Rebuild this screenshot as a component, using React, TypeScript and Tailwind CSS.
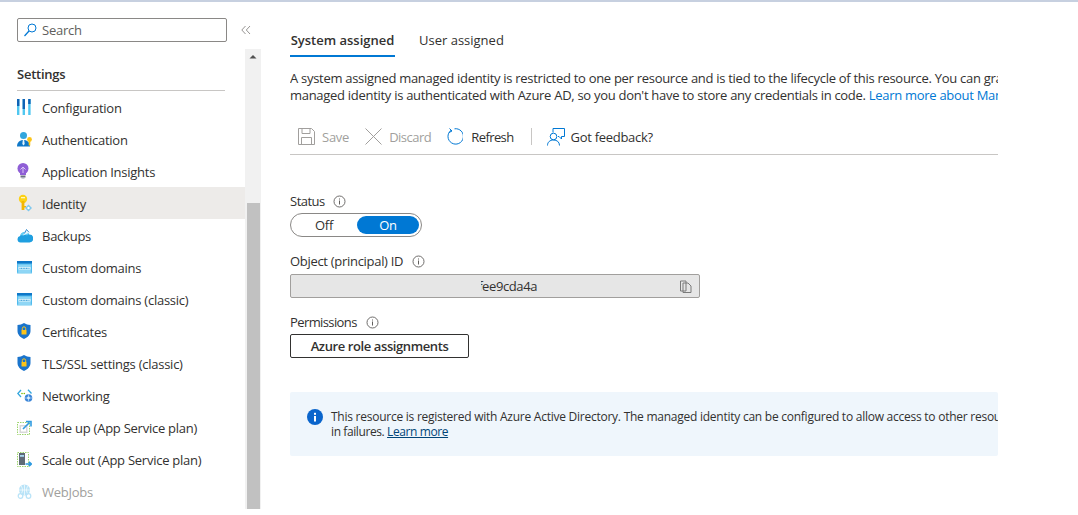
import React from "react";

const Key = () => (
  <svg width="16" height="18" viewBox="0 0 16 18"><circle cx="6" cy="5" r="4.2" fill="#fcd116"/><rect x="4.6" y="7" width="2.8" height="9" fill="#f2b705"/><rect x="7" y="12" width="2" height="1.5" fill="#f2b705"/><rect x="4" y="3" width="4" height="1.3" fill="#fff7c0"/><path d="M11.5 10.5l3.5 3.5-3.5 3.5-3.5-3.5z" fill="#7fc8ee"/><circle cx="11.5" cy="14" r="1.2" fill="#fff"/></svg>
);
const Config = () => (
  <svg width="14" height="16" viewBox="0 0 14 16"><rect x="0" y="0" width="2.4" height="16" fill="#50c7f0"/><rect x="5.6" y="0" width="2.4" height="16" fill="#50c7f0"/><rect x="11.2" y="0" width="2.4" height="16" fill="#50c7f0"/><rect x="0" y="0" width="2.4" height="7" fill="#0f62b5"/><rect x="5.6" y="0" width="2.4" height="10" fill="#0f62b5"/><rect x="11.2" y="0" width="2.4" height="5" fill="#0f62b5"/></svg>
);
const Auth = () => (
  <svg width="16" height="15" viewBox="0 0 16 15"><circle cx="6.5" cy="3.6" r="3.5" fill="#32a6dd"/><path d="M0 14.5c0-4 2.6-6.5 6.5-6.5s6.500 2.500 6.500 6.500z" fill="#0f78c8"/><path d="M5.800 8h1.400l.5 4-1.200 1.500L5.300 12z" fill="#e6f4fb"/><circle cx="12.500" cy="7.500" r="2.400" fill="#fcc419"/><rect x="11.700" y="8.500" width="1.600" height="5" fill="#fcc419"/></svg>
);
const Bulb = () => (
  <svg width="12" height="16" viewBox="0 0 12 16"><circle cx="6" cy="5.500" r="5.500" fill="#8f5fd6"/><path d="M3 9h6v3H3z" fill="#8f5fd6"/><path d="M3.500 6.500L6 4l2.500 2.500M6 4v6" stroke="#d9c6f5" strokeWidth="1" fill="none"/><rect x="3.500" y="12.500" width="5" height="2" fill="#6b7280"/><rect x="4.500" y="14.500" width="3" height="1" fill="#9ca3af"/></svg>
);
const Backup = () => (
  <svg width="16" height="15" viewBox="0 0 16 15"><path d="M3.500 14.500a3.300 3.300 0 01-.4-6.500A4.800 4.800 0 0112 6.500a3.900 3.900 0 01.5 8z" fill="#1f9fe0"/><path d="M3.500 7A5 5 0 0112 5.500l-2 2C9 6.500 7 6.300 5.500 7.500z" fill="#63cdf5"/><path d="M6 7.500L9.500 1l3 3.500z" fill="#e8f7fd"/><path d="M7.500 5.500l2-4 2.500 2.800" fill="none" stroke="#1578c8" strokeWidth=".8"/></svg>
);
const Domain = () => (
  <svg width="15" height="13" viewBox="0 0 15 13"><rect width="15" height="13" fill="#50bbee"/><rect x="0" y="0" width="15" height="2.500" fill="#0f78c8"/><rect x="1.200" y="3.500" width="12.600" height="8.300" fill="#8fd6f5"/><rect x="1.500" y="6" width="12" height="2.500" fill="#e6f7fd"/><path d="M2.500 7.300h10" stroke="#3b9fd8" strokeWidth="1.300" strokeDasharray="1 .6"/><rect y="11.800" width="15" height="1.200" fill="#b5e4f8"/></svg>
);
const Shield = () => (
  <svg width="14" height="16" viewBox="0 0 14 16"><path d="M7 0c2 1.300 4 1.800 6.500 2v6c0 3.500-2.700 6.300-6.500 8C3.200 14.300.5 11.500.5 8V2C3 1.800 5 1.300 7 0z" fill="#1a74cc"/><path d="M4.500 7h5v4.500h-5z" fill="#fcc419"/><path d="M5.300 7V5.500a1.700 1.700 0 013.400 0V7" stroke="#fcc419" strokeWidth="1" fill="none"/></svg>
);
const Net = () => (
  <svg width="16" height="13" viewBox="0 0 16 13"><path d="M4 1L.8 4.500 4 8" stroke="#32a6dd" strokeWidth="1.300" fill="none"/><path d="M11 .8l3.500 3.700" stroke="#32a6dd" strokeWidth="1.300" fill="none"/><circle cx="5" cy="4.500" r=".8" fill="#7fba00"/><circle cx="7.300" cy="4.500" r=".8" fill="#7fba00"/><circle cx="11.500" cy="9" r="3.800" fill="#3d86d8"/><path d="M8 9h7M11.500 5.500v7" stroke="#a9d2f5" strokeWidth=".8"/><circle cx="11.500" cy="9" r="1.400" fill="#e1f0fc"/></svg>
);
const ScaleUp = () => (
  <svg width="15" height="15" viewBox="0 0 15 15"><rect x=".5" y="2.500" width="12" height="12" fill="none" stroke="#9bd36a" strokeDasharray="1.500 1"/><rect x="2.500" y="5" width="8" height="8" fill="#d8d8d8"/><rect x="4" y="6.500" width="5" height="5" fill="#fff"/><path d="M6 9l6.500-6.500M9 1.500h5v5" stroke="#2f9be0" strokeWidth="1.600" fill="none"/></svg>
);
const ScaleOut = () => (
  <svg width="15" height="15" viewBox="0 0 15 15"><rect x=".5" y=".5" width="11" height="14" fill="none" stroke="#9bd36a" strokeDasharray="1.500 1"/><rect x="2" y="1" width="6" height="12" fill="#5f6b76"/><rect x="3" y="3" width="4" height="1.800" fill="#a8d8f0"/><path d="M8.500 12H14M12 9.800l2.300 2.200-2.300 2.200" stroke="#2f9be0" strokeWidth="1.600" fill="none"/></svg>
);
const Web = () => (
  <svg width="15" height="15" viewBox="0 0 15 15" opacity=".4"><circle cx="7.500" cy="6" r="5.500" fill="#50bbee"/><path d="M2 6h11M7.500.5v11M4 2c2 2.500 2 5.500 0 8M11 2c-2 2.500-2 5.500 0 8" stroke="#e6f7fd" strokeWidth=".8" fill="none"/><circle cx="3.500" cy="12" r="2.300" fill="none" stroke="#50bbee" strokeWidth="1.200"/><circle cx="11.500" cy="12" r="2.300" fill="none" stroke="#50bbee" strokeWidth="1.200"/></svg>
);

const items: [string, React.ReactNode][] = [
  ["Configuration", <Config />],
  ["Authentication", <Auth />],
  ["Application Insights", <Bulb />],
  ["Identity", <Key />],
  ["Backups", <Backup />],
  ["Custom domains", <Domain />],
  ["Custom domains (classic)", <Domain />],
  ["Certificates", <Shield />],
  ["TLS/SSL settings (classic)", <Shield />],
  ["Networking", <Net />],
  ["Scale up (App Service plan)", <ScaleUp />],
  ["Scale out (App Service plan)", <ScaleOut />],
  ["WebJobs", <Web />],
];

const Info = () => (
  <svg width="13" height="13" viewBox="0 0 13 13" className="text-[#605e5c]"><circle cx="6.500" cy="6.500" r="5.500" fill="none" stroke="currentColor" strokeWidth=".9"/><rect x="6" y="5.500" width="1" height="4" fill="currentColor"/><rect x="6" y="3.500" width="1" height="1" fill="currentColor"/></svg>
);

export default function App() {
  return (
    <div className="w-[1078px] h-[515px] bg-white overflow-hidden text-[13px] leading-[17px] text-[#323130] tracking-[-0.25px]" style={{ fontFamily: '"Open Sans", sans-serif' }}>
      <div className="h-[2px] bg-[#c7d0e0]" />
      <div className="flex h-[513px]">
        <aside className="w-[261px] shrink-0 flex flex-col">
          <div className="flex items-start pl-[17px] pt-[16px] h-[47px]">
            <div className="w-[210px] h-[24px] border border-[#8a8886] rounded-[2px] flex items-center pl-[6px] gap-[5px] text-[#605e5c]">
              <svg width="13" height="14" viewBox="0 0 13 14"><circle cx="8" cy="5" r="4" fill="none" stroke="#0078d4" strokeWidth="1"/><path d="M5 8l-4.500 5" stroke="#0078d4" strokeWidth="1.200"/></svg>
              <span>Search</span>
            </div>
            <svg width="10" height="10" viewBox="0 0 10 10" className="ml-[14px] mt-[7px]"><path d="M4.500 1L.8 5l3.700 4M9 1L5.300 5 9 9" fill="none" stroke="#8a8886" strokeWidth=".9"/></svg>
          </div>
          <div className="flex flex-1 min-h-0">
            <div className="w-[245px] shrink-0 overflow-hidden">
              <div className="pl-[17px] pr-[20px]">
                <div className="h-[42px] pt-[17px] border-b border-[#c8c6c4] font-semibold text-[#323130] leading-[17px]">Settings</div>
              </div>
              <nav>
                {items.map(([label, icon]) => (
                  <div key={label} className={`h-[32px] flex items-center pl-[17px] ${label === "Identity" ? "bg-[#edebe9]" : ""} ${label === "WebJobs" ? "text-[#a19f9d]" : ""}`}>
                    <span className="w-[25px] shrink-0 flex items-center">{icon}</span>
                    <span className="pt-[2px] whitespace-nowrap">{label}</span>
                  </div>
                ))}
              </nav>
            </div>
            <div className="w-[16px] h-[460px] bg-[#f1f1f1] flex flex-col pl-[2px] pr-[1px] shrink-0">
              <svg width="12" height="16" viewBox="0 0 12 16" className="shrink-0"><path d="M2.500 9.500h7L6 6z" fill="#505050"/></svg>
              <div className="h-[138px] shrink-0" />
              <div className="flex-1 bg-[#c1c1c1]" />
            </div>
          </div>
        </aside>
        <main className="w-[708px] ml-[29px] shrink-0 overflow-hidden">
          <div className="flex h-[55px] tracking-normal">
            <div className="w-[105px] h-[55px] pt-[30px] border-b-2 border-[#0078d4] font-semibold text-center whitespace-nowrap">System assigned</div>
            <div className="ml-[24px] pt-[30px]">User assigned</div>
          </div>
          <div className="mt-[13px] whitespace-nowrap leading-[17px] tracking-[-0.29px]">
            <p>A system assigned managed identity is restricted to one per resource and is tied to the lifecycle of this resource. You can grant permissions to the</p>
            <p>managed identity is authenticated with Azure AD, so you don't have to store any credentials in code. <span className="text-[#0078d4]">Learn more about Managed identities</span></p>
          </div>
          <div className="mt-[15px] h-[36px] border-b border-[#c8c6c4] flex items-center pl-[8px]">
            <svg width="17" height="17" viewBox="0 0 17 17"><path d="M.5.500h13l3 3v13H.5z" fill="none" stroke="#a19f9d"/><path d="M4 .5v5h8v-5M3.500 16.500v-7h10v7" fill="none" stroke="#a19f9d"/></svg>
            <span className="ml-[7px] pt-[2px] text-[#a19f9d]">Save</span>
            <svg width="17" height="17" viewBox="0 0 17 17" className="ml-[16px]"><path d="M.5.500l16 16M16.500.5l-16 16" stroke="#a19f9d" strokeWidth="1"/></svg>
            <span className="ml-[7px] pt-[2px] text-[#a19f9d] tracking-[-0.5px]">Discard</span>
            <svg width="17" height="17" viewBox="0 0 17 17" className="ml-[15px]"><path d="M5 2.300A7.700 7.700 0 108.500.8" fill="none" stroke="#0078d4" strokeWidth="1"/><path d="M3.500.5L6 3 3 4.500" fill="none" stroke="#0078d4" strokeWidth="1"/></svg>
            <span className="ml-[8px] pt-[2px] tracking-[-0.6px]">Refresh</span>
            <div className="w-px h-[17px] bg-[#c8c6c4] ml-[17px]" />
            <svg width="18" height="18" viewBox="0 0 18 18" className="ml-[15px]"><path d="M6 4.500V.5h11.500v8h-3v2.500L12 8.500h-1" fill="none" stroke="#0078d4"/><circle cx="6.500" cy="8.500" r="3.300" fill="none" stroke="#0078d4"/><path d="M.5 17.500c0-3.500 2.500-5.500 6-5.500s6 2 6 5.500" fill="none" stroke="#0078d4"/></svg>
            <span className="ml-[6px] pt-[2px] tracking-[-0.3px]">Got feedback?</span>
          </div>
          <div className="mt-[38px] flex items-center gap-[8px] h-[17px] tracking-[-0.5px]"><span>Status</span><Info /></div>
          <div className="mt-[3px] w-[132px] h-[24px] rounded-full border border-[#8a8886] flex items-center p-[2px]">
            <div className="flex-1 text-center pr-[2px]">Off</div>
            <div className="w-[62px] h-[18px] rounded-full bg-[#0078d4] text-white text-center leading-[18px]">On</div>
          </div>
          <div className="mt-[16px] flex items-center gap-[9px] h-[17px] tracking-[-0.3px]"><span>Object (principal) ID</span><Info /></div>
          <div className="mt-[4px] w-[410px] h-[24px] border border-[#a19f9d] rounded-[2px] bg-[#e6e6e6] flex items-center pl-[190px] pr-[7px] justify-between tracking-[-0.4px]">
            <span className="w-[56px] overflow-hidden flex justify-end whitespace-nowrap"><span>fee9cda4a</span></span>
            <svg width="12" height="13" viewBox="0 0 12 13"><path d="M.5 1h5.500v10H.5z M3 3h5l3 3v6.500H3z" fill="#e6e6e6" stroke="#7a7a7a" strokeWidth="1"/></svg>
          </div>
          <div className="mt-[16px] flex items-center gap-[9px] h-[17px] tracking-[-0.6px]"><span>Permissions</span><Info /></div>
          <div className="mt-[3px] w-[179px] h-[24px] border border-[#323130] rounded-[2px] flex items-center justify-center font-semibold tracking-[-0.4px]">Azure role assignments</div>
          <div className="mt-[34px] h-[64px] bg-[#eff6fc] rounded-[2px] pl-[17px] flex items-center gap-[8px] whitespace-nowrap">
            <svg width="16" height="16" viewBox="0 0 16 16" className="shrink-0 -mt-[14px]"><circle cx="8" cy="8" r="8" fill="#0a65cc"/><rect x="7" y="7" width="2" height="5.500" fill="#fff"/><rect x="7" y="3.800" width="2" height="2" fill="#fff"/></svg>
            <div className="leading-[15px] text-[12px]">
              <p>This resource is registered with Azure Active Directory. The managed identity can be configured to allow access to other resources and services.</p>
              <p className="tracking-[-0.4px]">in failures. <span className="underline text-[#004578]">Learn more</span></p>
            </div>
          </div>
        </main>
      </div>
    </div>
  );
}
